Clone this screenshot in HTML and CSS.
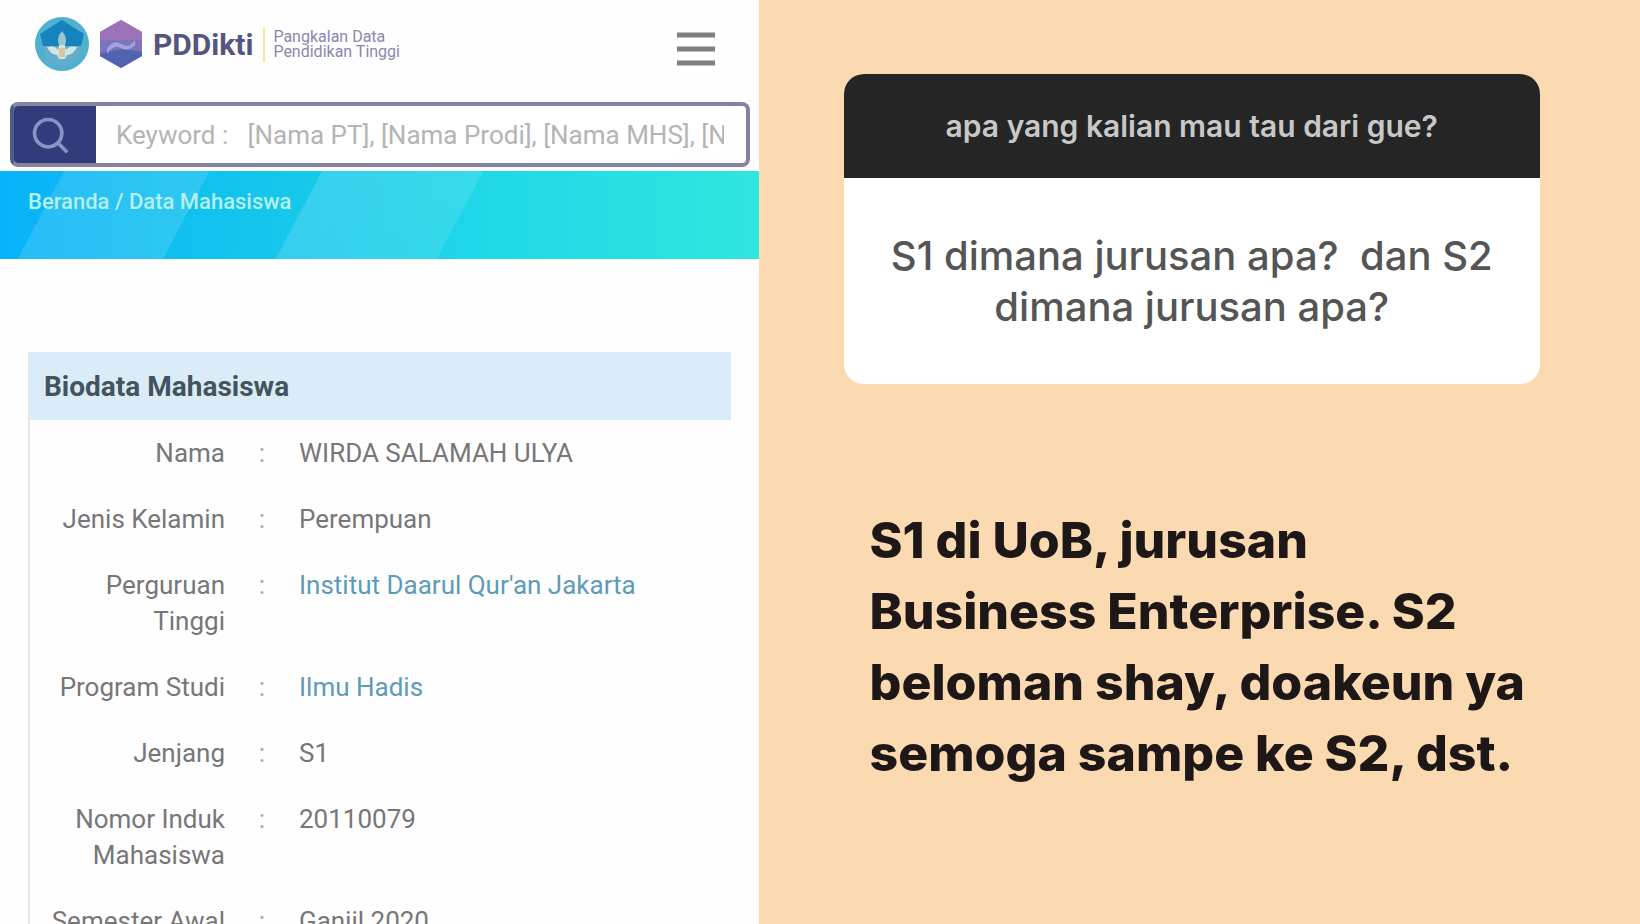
FILE: index.html
```html
<!DOCTYPE html>
<html lang="id">

<head>
  <meta charset="UTF-8" />
  <meta name="viewport" content="width=device-width, initial-scale=1.0" />
  <title>PDDikti - Data Mahasiswa</title>
  <link rel="stylesheet" href="styles.css">
</head>

<body>
  <div class="page">
    <main class="profile">
      <header class="header">
        <a class="brand" href="#" aria-label="PDDikti">
          <svg class="logo-ministry" viewBox="0 0 56 56" aria-hidden="true">
            <circle cx="28" cy="28" r="27" fill="#4fb0cf" />
            <path d="M28 4 50 18 46 34H10L6 18Z" fill="#1583bd" />
            <path d="M8 30h40l-6 15-14 7-14-7Z" fill="#62aecb" />
            <path d="M13 31q8-2 11 3l4-17 4 17q3-5 11-3-3 7-10 8l-2 4h-6l-2-4q-7-1-10-8Z" fill="#d3e6e4" />
            <path d="M28 15q6 7 3 14h-6q-3-7 3-14Z" fill="#9cc5cc" />
            <path d="M25 32h6v9h-6z" fill="#d8c79c" />
          </svg>
          <svg class="logo-dikti" viewBox="0 0 48 52" aria-hidden="true">
            <path d="M24 2 45 14v24L24 50 3 38V14Z" fill="#7c74bd" />
            <path d="M24 2 45 14v8H3v-8Z" fill="#9c72b8" />
            <path d="M3 36q21-8 42-2v4L24 50 3 38Z" fill="#4f63b0" />
            <path d="M10 31q6-10 14-5t14-4v5q-7 7-14 3t-14 6Z" fill="#a6a3dc" />
          </svg>
          <span class="brand-name">PDDikti</span>
          <span class="brand-text">Pangkalan Data<br>Pendidikan Tinggi</span>
        </a>
        <button class="menu" type="button" aria-label="Menu">
          <svg viewBox="0 0 38 36" aria-hidden="true">
            <path d="M0 4h38M0 18h38M0 32h38" stroke="#808080" stroke-width="5" />
          </svg>
        </button>
      </header>

      <form class="search">
        <button class="search-btn" type="button" aria-label="Cari">
          <svg viewBox="0 0 44 44" aria-hidden="true">
            <circle cx="20" cy="20" r="15" fill="none" stroke="#8b92c4" stroke-width="4" />
            <path d="M31 31l10 10" stroke="#8b92c4" stroke-width="4" />
          </svg>
        </button>
        <input class="search-input" type="text" aria-label="Keyword"
          placeholder="Keyword :   [Nama PT], [Nama Prodi], [Nama MHS], [NIM]" />
      </form>

      <nav class="banner">
        <a href="#">Beranda</a> / <a href="#">Data Mahasiswa</a>
      </nav>

      <section class="panel">
        <h2>Biodata Mahasiswa</h2>
        <table>
          <tr>
            <th scope="row">Nama</th>
            <td class="colon">:</td>
            <td>WIRDA SALAMAH ULYA</td>
          </tr>
          <tr>
            <th scope="row">Jenis Kelamin</th>
            <td class="colon">:</td>
            <td>Perempuan</td>
          </tr>
          <tr>
            <th scope="row">Perguruan Tinggi</th>
            <td class="colon">:</td>
            <td><a href="#">Institut Daarul Qur'an Jakarta</a></td>
          </tr>
          <tr>
            <th scope="row">Program Studi</th>
            <td class="colon">:</td>
            <td><a href="#">Ilmu Hadis</a></td>
          </tr>
          <tr>
            <th scope="row">Jenjang</th>
            <td class="colon">:</td>
            <td>S1</td>
          </tr>
          <tr>
            <th scope="row">Nomor Induk Mahasiswa</th>
            <td class="colon">:</td>
            <td>20110079</td>
          </tr>
          <tr>
            <th scope="row">Semester Awal</th>
            <td class="colon">:</td>
            <td>Ganjil 2020</td>
          </tr>
        </table>
      </section>
    </main>

    <aside class="story">
      <div class="question">
        <div class="question-head">apa yang kalian mau tau dari gue?</div>
        <div class="question-body">S1 dimana jurusan apa?&nbsp; dan S2 dimana jurusan apa?</div>
      </div>
      <p class="answer">S1 di UoB, jurusan Business Enterprise. S2 beloman shay, doakeun ya semoga sampe ke S2, dst.</p>
    </aside>
  </div>
</body>

</html>
```

FILE: styles.css
```css
* {
  box-sizing: border-box;
}

body {
  margin: 0;
  font-family: Roboto, "Liberation Sans", sans-serif;
  background: #fff;
}

button {
  border: none;
  padding: 0;
  cursor: pointer;
}

a {
  text-decoration: none;
}

.page {
  display: grid;
  grid-template-columns: 37fr 43fr;
  height: 100vh;
}

.profile {
  background: #fefefe;
  overflow: hidden;
}

/* header */
.header {
  display: flex;
  align-items: flex-start;
  justify-content: space-between;
  height: 102px;
  padding: 16px 44px 0 34px;
}

.brand {
  display: flex;
  align-items: center;
}

.logo-ministry {
  width: 56px;
  height: 56px;
}

.logo-dikti {
  width: 48px;
  height: 52px;
  margin: 0 8px 0 7px;
}

.brand-name {
  color: #55557f;
  font-size: 30px;
  font-weight: 700;
  padding-right: 10px;
  border-right: 2px solid #f3e8a8;
}

.brand-text {
  color: #8888ae;
  font-size: 16px;
  line-height: 15px;
  padding-left: 8px;
}

.menu {
  margin-top: 15px;
  background: none;
}

.menu svg {
  display: block;
  width: 38px;
  height: 36px;
}

/* search */
.search {
  display: flex;
  height: 65px;
  margin: 0 9px 4px 10px;
  border: 4px solid #8484a0;
  border-left-color: #505a8c;
  border-radius: 8px;
  overflow: hidden;
}

.search-btn {
  display: flex;
  align-items: center;
  justify-content: center;
  flex: none;
  width: 82px;
  padding-right: 10px;
  background: #323c7a;
}

.search-btn svg {
  width: 40px;
  height: 40px;
}

.search-input {
  flex: 1;
  min-width: 0;
  border: none;
  outline: none;
  margin: 0 22px 0 20px;
  padding: 0;
  font-family: inherit;
  font-size: 26px;
}

.search-input::placeholder {
  color: #b4b4b4;
}

.banner {
  height: 88px;
  padding: 16px 28px;
  color: #b5f0ee;
  font-size: 22px;
  line-height: 30px;
  font-weight: 500;
  background:
    linear-gradient(118deg, transparent 8%, rgba(255, 255, 255, 0.12) 8%, rgba(255, 255, 255, 0.12) 26%, transparent 26%, transparent 40%, rgba(255, 255, 255, 0.14) 40%, rgba(255, 255, 255, 0.1) 60%, transparent 60%),
    linear-gradient(90deg, #08b3f8, #14c6ec 35%, #22dae6 68%, #30e6de);
}

.banner a {
  color: #b5f0ee;
}

/* biodata */
.panel {
  margin: 93px 28px 0;
  border-left: 2px solid #e6e6e6;
}

.panel h2 {
  margin: 0;
  padding: 17px 14px 15px;
  background: #d9ecf7;
  color: #44545e;
  font-size: 28px;
  line-height: 36px;
}

.panel table {
  width: 100%;
  border-collapse: collapse;
  color: #777;
  font-size: 26px;
  line-height: 36px;
}

.panel th,
.panel td {
  padding: 15px 0;
  text-align: left;
  vertical-align: top;
  font-weight: 400;
}

.panel th {
  width: 195px;
  padding-left: 14px;
  text-align: right;
}

.panel .colon {
  width: 74px;
  text-align: center;
  color: #aaa;
}

.panel a {
  color: #5e9bb8;
}

/* story */
.story {
  background: #fbd9b1;
  padding: 74px 100px 0 85px;
  font-family: Inter, "Liberation Sans", sans-serif;
}

.question {
  border-radius: 20px;
  overflow: hidden;
  background: #fff;
  text-align: center;
}

.question-head {
  padding: 34px 20px;
  background: #252525;
  color: #c8c8c8;
  font-size: 30px;
  line-height: 36px;
  font-weight: 600;
}

.question-body {
  padding: 52px 40px;
  color: #555;
  font-size: 40px;
  line-height: 51px;
  font-weight: 500;
}

.answer {
  margin: 121px 0 0 26px;
  color: #1d1717;
  font-size: 50px;
  line-height: 71px;
  font-weight: 800;
}
```
